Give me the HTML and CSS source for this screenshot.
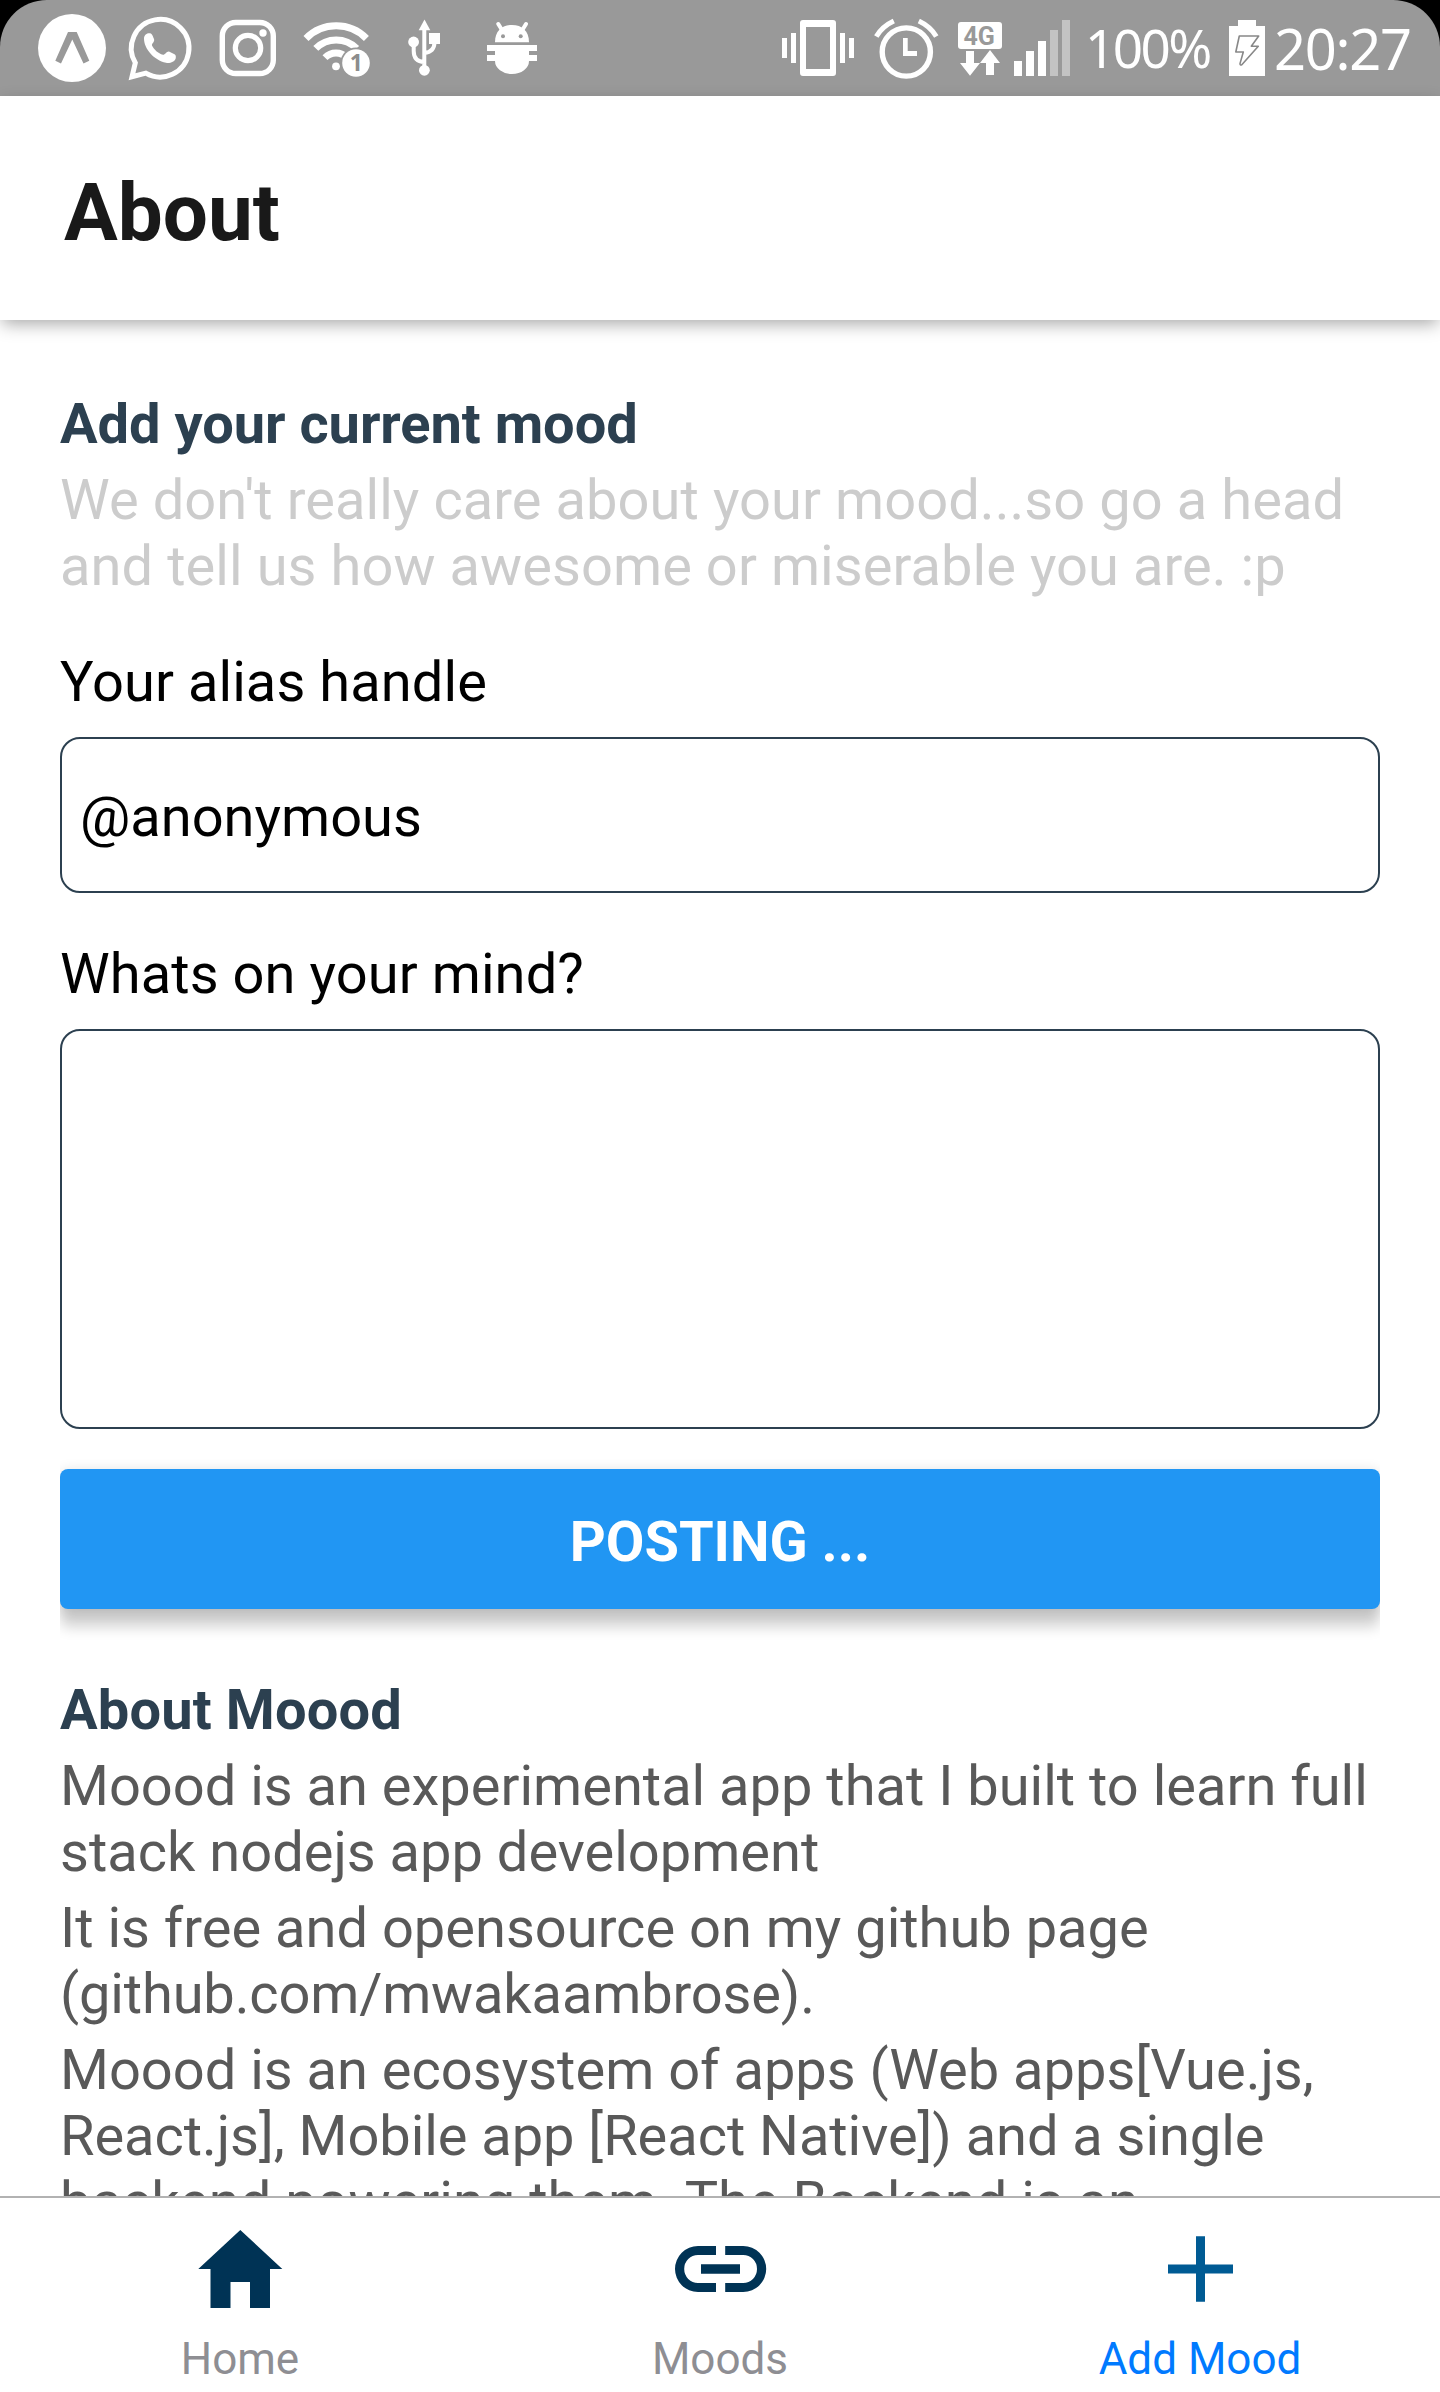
FILE: index.html
```html
<!DOCTYPE html>
<html lang="en">
<head>
<meta charset="utf-8">
<title>About</title>
<link rel="stylesheet" href="styles.css">
</head>
<body>
<div class="screen">
  <div class="status-wrap">
    <div class="status">
      <svg class="ic" width="116" viewBox="0 0 116 96"><circle cx="72" cy="48" r="34"/><path class="gray" d="M68 32h8.700l12.600 28.700-5.800 2.800-11.200-24-11.300 24-5.700-2.800z"/></svg>
      <svg class="ic" width="90" viewBox="116 0 90 96"><path class="line" stroke-width="5" d="M135.300 62.800L132 76.700 145.800 73.200A28.800 28.800 0 1 0 135.300 62.800Z"/><path d="M144 38.500C144 35 147 33.200 149 33.200C152 33.200 152.500 35 154 39C155 42 151.500 43.500 152 45.500C154 49.500 158 53.500 163 54.800C165 55 166.500 51.200 169 51.500L174.500 54.300C176 55.200 176 56.500 175.700 58.500C174.500 62 170 63.500 166 62.800C154 60 144 49 144 38.500Z"/></svg>
      <svg class="ic" width="86" viewBox="206 0 86 96"><rect class="line" stroke-width="5.400" x="222.300" y="22.500" width="51" height="51" rx="13.500"/><circle class="line" stroke-width="5.200" cx="248" cy="48" r="12.700"/><circle cx="263" cy="33" r="3.700"/></svg>
      <svg class="ic" width="104" viewBox="292 0 104 96"><path class="line" stroke-width="7" d="M306 38.500A42.300 42.300 0 0 1 366.400 38.500"/><path class="line" stroke-width="7" d="M315.800 48.400A28.700 28.700 0 0 1 356.600 48.400"/><path class="line" stroke-width="7" d="M325 57.600A15.500 15.500 0 0 1 347 57.600"/><circle cx="336" cy="66.300" r="3.900"/><circle class="gray" cx="356" cy="63" r="15.600"/><circle cx="356" cy="63" r="13.800"/><text class="badge" x="349.700" y="71">1</text></svg>
      <svg class="ic" width="64" viewBox="396 0 64 96"><path d="M424.500 19.500l5.800 10.800h-11.600z"/><path class="line" stroke-width="4" d="M424.300 28V70M413.700 42v9q0 10.500 10.600 11M434.500 42q0 10-10.200 11"/><circle cx="413.600" cy="42" r="5.400"/><circle cx="424.400" cy="70.300" r="5.400"/><path d="M429 33h11v11h-11z"/></svg>
      <svg class="ic" width="90" viewBox="460 0 90 96"><path d="M495 42.300C495 31 502 25 512 25S529 31 529 42.300Z"/><path class="line round" stroke-width="4" d="M498.300 24l4 6.500M526 24l-4 6.500"/><circle class="gray" cx="503" cy="36.300" r="2"/><circle class="gray" cx="520.700" cy="36.300" r="2"/><path d="M487 45h50v6h-8v4h8v6h-8a17 13 0 0 1-34 0h-8v-6h8v-4h-8z"/></svg>
      <span class="spacer"></span>
      <svg class="ic" width="90" viewBox="776 0 90 96"><path fill-rule="evenodd" d="M803 20h30q3 0 3 3v50q0 3-3 3h-30q-3 0-3-3V23q0-3 3-3zM806 27v42h24V27z"/><path d="M782 38h5v20h-5zM791 33h5v30h-5zM840 33h5v30h-5zM849 38h5v20h-5z"/></svg>
      <svg class="ic" width="84" viewBox="866 0 84 96"><circle class="line" stroke-width="5.400" cx="906.300" cy="52" r="24.100"/><path d="M903 38h4.700v13H917v5h-14z"/><path class="line" stroke-width="5" d="M876.300 36.500Q882 26.500 893.800 21M918.800 21Q930.500 26.500 936.300 36.500"/></svg>
      <svg class="ic" width="58" viewBox="950 0 58 96"><rect x="958" y="22" width="44" height="27" rx="3"/><text class="fourg" x="963.500" y="44.700">4G</text><path d="M966 51h8v12h6l-10 12.700L960 63h6zM990 50l10 13h-6v12h-8V63h-6z"/></svg>
      <svg class="ic" width="78" viewBox="1008 0 78 96"><path d="M1014 61h8v15h-8zM1026 51h8v25h-8zM1038 41h8v35h-8z"/><path class="faint" d="M1050 30h8v46h-8zM1062 20h8v56h-8z"/></svg>
      <span class="pct">100%</span>
      <svg class="ic" width="50" viewBox="1222 0 50 96"><path d="M1238 20h18v6h9v50h-36V26h9z"/><path class="bolt" d="M1239.300 36h19.400l-7.400 10.200h7l-16.500 18.600q-1.800.8-1.800-1.200l3.300-11.600h-7.500z"/></svg>
      <span class="clock">20:27</span>
    </div>
  </div>
  <header class="header"><h1>About</h1></header>
  <main class="content">
    <h2>Add your current mood</h2>
    <p class="muted">We don't really care about your mood...so go a head<br>and tell us how awesome or miserable you are. :p</p>
    <label class="label alias-label">Your alias handle</label>
    <div class="field">@anonymous</div>
    <label class="label mind-label">Whats on your mind?</label>
    <div class="field area"></div>
    <div class="button">POSTING ...</div>
    <h2 class="about-title">About Moood</h2>
    <p>Moood is an experimental app that I built to learn full<br>stack nodejs app development</p>
    <p>It is free and opensource on my github page<br><span class="repo">(github.com/mwakaambrose).</span></p>
    <p>Moood is an ecosystem of apps (Web apps[Vue.js,<br><span class="stack">React.js], Mobile app [React Native]) and a single</span><br>backend powering them. The Backend is an</p>
  </main>
  <nav class="tabs">
    <div class="tab"><svg width="120" height="120" viewBox="180 2208 120 120"><path d="M240.300 2230L282.300 2269H270v39h-20v-26h-19.500v26H210.500v-39H198.300z"/></svg><span>Home</span></div>
    <div class="tab"><svg width="120" height="120" viewBox="660 2208 120 120"><path d="M716 2246v9h-18a13.800 14 0 0 0 0 28h18v9h-18a23 23 0 0 1 0-46zM725.200 2246v9h18a13.800 14 0 0 1 0 28h-18v9h18a23 23 0 0 0 0-46zM701 2264.300h39v9.400h-39z"/></svg><span>Moods</span></div>
    <div class="tab active"><svg width="120" height="120" viewBox="1140 2208 120 120"><path d="M1196 2236.300h9v28.100h28v9h-28v28.300h-9v-28.300h-28v-9h28z"/></svg><span>Add Mood</span></div>
  </nav>
</div>
</body>
</html>
```
FILE: styles.css
```css
* { box-sizing: border-box; margin: 0; padding: 0; }
body { background: #fff; font-family: Roboto, "Liberation Sans", sans-serif; }
.screen { width: 1440px; height: 2392px; display: flex; flex-direction: column; overflow: hidden; }

.status-wrap { flex: none; height: 96px; background: #000; }
.status { height: 96px; background: #999; border-radius: 47px 47px 0 0; display: flex; align-items: center; color: #fff; font-family: "Noto Sans", "Open Sans", sans-serif; white-space: nowrap; }
.ic { flex: none; height: 96px; fill: #fff; display: block; }
.ic .gray { fill: #999; }
.ic .faint { fill: #c3c3c3; }
.ic .line { fill: none; stroke: #fff; }
.ic .round { stroke-linecap: round; }
.ic .bolt { fill: none; stroke: #888; stroke-width: 1.6; stroke-linejoin: round; }
.ic .badge { font: bold 23px "Noto Sans", sans-serif; fill: #8c8c8c; }
.ic .fourg { font: bold 25px Roboto, sans-serif; fill: #999; }
.spacer { flex: 1; }
.pct { width: 137px; margin-left: -1px; font-size: 53px; line-height: 96px; letter-spacing: -2.6px; }
.clock { width: 168px; padding-left: 2px; font-size: 56px; line-height: 96px; letter-spacing: -1.3px; }

.header { flex: none; position: relative; z-index: 1; height: 224px; padding-left: 64px; display: flex; align-items: center; background: #fff; box-shadow: 0 6px 16px -2px rgba(0, 0, 0, .34); }
h1 { font-size: 80px; line-height: 94px; font-weight: 700; color: #191919; padding-top: 9px; }

.content { flex: 1; min-height: 0; overflow: hidden; padding: 71px 60px 0; font-size: 56px; line-height: 66px; color: #595959; }
h2 { font-size: 56px; line-height: 66px; font-weight: 700; color: #2c4050; letter-spacing: -.04px; }
.about-title { letter-spacing: .15px; }
p { margin-top: 10px; white-space: nowrap; }
.muted { color: #ccc; letter-spacing: .07px; }
.label { display: block; color: #000; letter-spacing: .08px; }
.repo { letter-spacing: -.15px; }
.stack { letter-spacing: -.05px; }
.alias-label { margin-top: 50px; }
.mind-label { margin-top: 48px; }
.field { margin-top: 22px; height: 156px; border: 2px solid #2c4050; border-radius: 20px; padding: 45px 18px 0; color: #000; }
.area { height: 400px; }
.button { margin: 40px 0 68px; height: 140px; border-radius: 8px; background: #2196f3; color: #fff; font-weight: 700; line-height: 146px; text-align: center; box-shadow: 0 18px 14px rgba(0, 0, 0, .18), 0 2px 14px rgba(0, 0, 0, .14); clip-path: inset(-20px 0 -40px); }

.tabs { flex: none; height: 196px; display: flex; border-top: 2px solid #b2b2b2; background: #fff; }
.tab { flex: 1; display: flex; flex-direction: column; align-items: center; padding-top: 10px; font-size: 44px; line-height: 52px; color: #8e8e93; }
.tab svg { fill: #035; }
.tab span { margin-top: 5px; }
.tab.active { color: #007aff; }
.tab.active svg { fill: #005b94; }
```
